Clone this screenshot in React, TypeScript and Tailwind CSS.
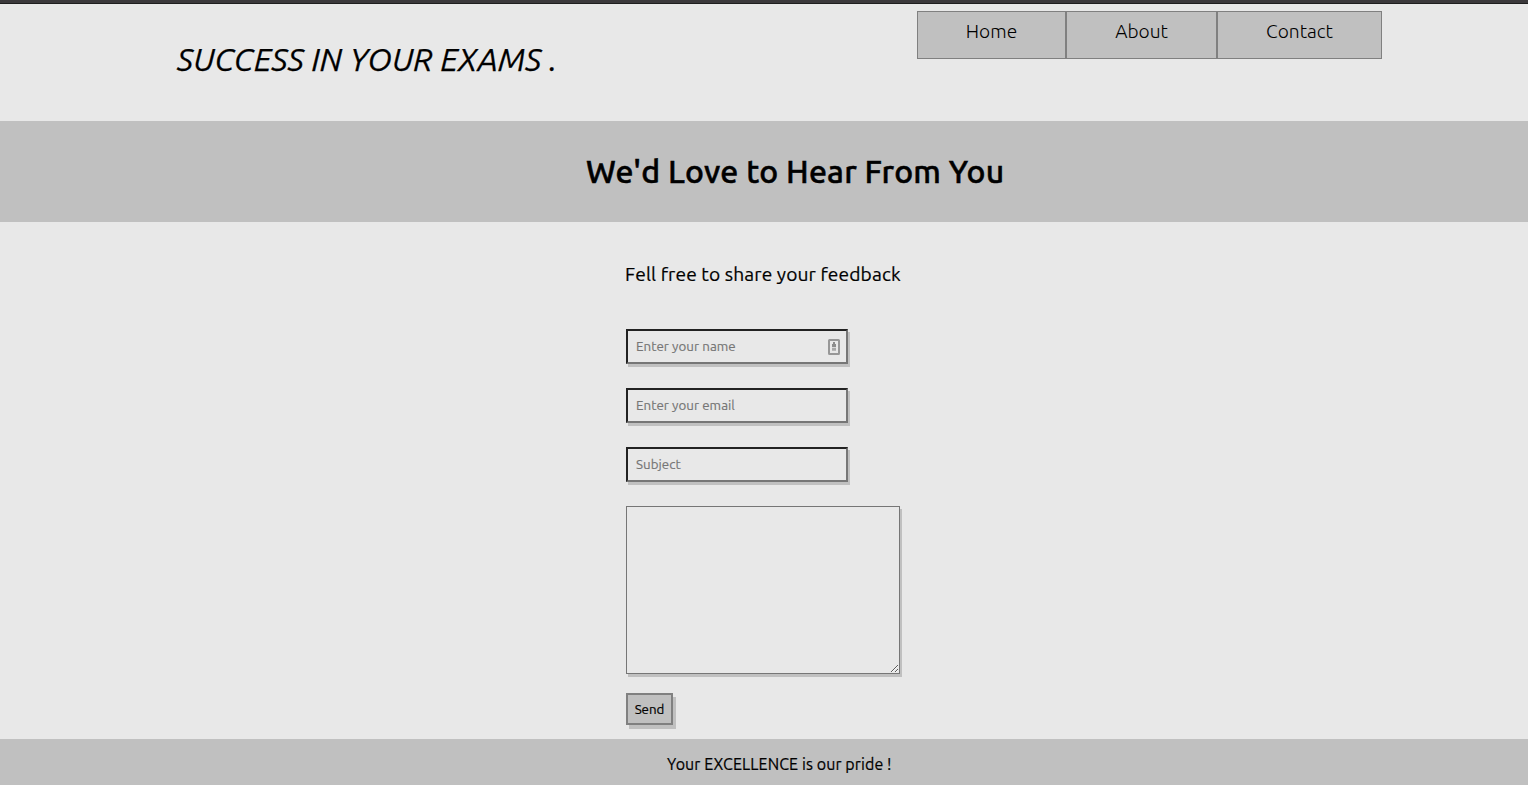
import React from "react";

const navItems = [
  { label: "Home", box: "w-[149px]" },
  { label: "About", box: "w-[151px]" },
  { label: "Contact", box: "w-[165px]" },
];

const field =
  "block h-[35px] w-[222px] rounded-none border-2 border-t-[#222] border-l-[#222] border-r-[#767676] border-b-[#767676] bg-[#e8e8e8] px-2 pt-0 pb-px text-[13.333px] tracking-[0.05px] shadow-[2px_3px_0_#c0c0c0] outline-none [-webkit-text-stroke:0.15px] placeholder:text-[#757575] placeholder:opacity-100";

function ContactCardIcon() {
  return (
    <svg
      className="absolute top-[10px] left-[202px] h-[16px] w-[12px]"
      viewBox="0 0 12 16"
      fill="none"
    >
      <rect x="1" y="1" width="10" height="14" rx="0.5" stroke="#979797" strokeWidth="2" />
      <path d="M5 3h2v2h1v3H4V5h1z" fill="#8c8c8c" />
      <path d="M4 9.5h4M4 11h4" stroke="#a8a8a8" strokeWidth="1.4" />
    </svg>
  );
}

export default function App() {
  return (
    <div className="flex h-[785px] w-full flex-col overflow-hidden bg-[#e8e8e8] font-['Ubuntu','Noto_Sans',sans-serif] text-black">
      <div className="h-[4px] shrink-0 border-b border-[#1e1e1e] bg-[#3b393b]" />

      <header className="flex h-[117px] shrink-0 items-start justify-between pr-[146px] pl-[177px]">
        <h1 className="mt-[31px] text-[32px] leading-[48px] tracking-[0.14px] whitespace-nowrap italic [-webkit-text-stroke:0.25px]">
          SUCCESS IN YOUR EXAMS .
        </h1>
        <nav className="mt-[7px] flex">
          {navItems.map((item) => (
            <a
              key={item.label}
              href="#"
              className={`flex h-[48px] justify-center border border-[#808080] bg-[#c0c0c0] pt-[6px] text-[19.2px] leading-[26px] font-light ${item.box}`}
            >
              {item.label}
            </a>
          ))}
        </nav>
      </header>

      <section className="flex h-[101px] shrink-0 items-center bg-[#c0c0c0] pb-[2px] pl-[586px]">
        <h2 className="text-[32px] leading-[40px] font-medium tracking-[0.2px] whitespace-nowrap [-webkit-text-stroke:0.5px]">
          We'd Love to Hear From You
        </h2>
      </section>

      <main className="flex h-[517px] shrink-0 flex-col items-start pl-[626px]">
        <p className="mt-[38px] -ml-px text-[19.2px] leading-[28px] tracking-[0.11px] whitespace-nowrap [-webkit-text-stroke:0.2px]">
          Fell free to share your feedback
        </p>
        <form className="mt-[41px] flex flex-col items-start" onSubmit={(e) => e.preventDefault()}>
          <div className="relative">
            <input className={field} type="text" placeholder="Enter your name" />
            <ContactCardIcon />
          </div>
          <input className={`${field} mt-6`} type="email" placeholder="Enter your email" />
          <input className={`${field} mt-6`} type="text" placeholder="Subject" />
          <textarea className="mt-6 block h-[168px] w-[274px] resize rounded-none border border-[#767676] bg-[#e8e8e8] p-2 text-[13.333px] shadow-[2px_3px_0_#c0c0c0] outline-none" />
          <button
            type="submit"
            className="mt-[19px] flex h-[32px] w-[47px] items-center justify-center border-2 border-[#808080] bg-[#c0c0c0] pt-[2px] text-[13.333px] shadow-[3px_4px_0_#c0c0c0] [-webkit-text-stroke:0.2px]"
          >
            Send
          </button>
        </form>
      </main>

      <footer className="flex h-[46px] shrink-0 items-center bg-[#c0c0c0] pt-[4px] pl-[667px]">
        <p className="text-[16px] leading-6 tracking-[0.1px] whitespace-nowrap [-webkit-text-stroke:0.2px]">
          Your EXCELLENCE is our pride !
        </p>
      </footer>
    </div>
  );
}
